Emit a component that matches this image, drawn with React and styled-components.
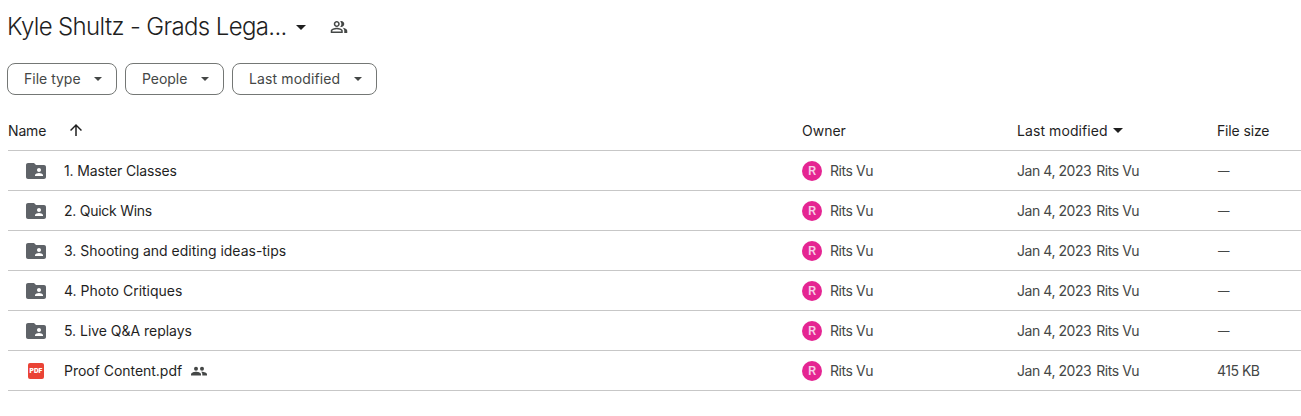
import React from 'react';
import styled, { createGlobalStyle } from 'styled-components';
import { MdArrowUpward, MdFolderShared, MdOutlinePeopleAlt } from 'react-icons/md';

const GlobalStyle = createGlobalStyle`
  * {
    box-sizing: border-box;
  }

  body {
    margin: 0;
    background: #fff;
    color: #1f1f1f;
    font-family: Inter, Roboto, sans-serif;
    font-size: 14px;
  }
`;

const Page = styled.main`
  height: 416px;
  padding-left: 7px;
  overflow: hidden;
`;

const TitleBar = styled.header`
  display: flex;
  align-items: center;
  height: 54px;
`;

const Title = styled.h1`
  width: 289px;
  margin: 0;
  font-size: 24px;
  font-weight: 300;
  line-height: 32px;
  letter-spacing: ${props => props.$spacing}px;
  white-space: nowrap;
`;

const Caret = styled.svg`
  flex: none;
  width: ${props => props.$width}px;
  height: ${props => props.$width / 2}px;
  margin-left: ${props => props.$gap || 0}px;
  fill: ${props => props.$color || '#1f1f1f'};
`;

const SharedIcon = styled(MdOutlinePeopleAlt)`
  margin-left: 24px;
  width: 18px;
  height: 18px;
  color: #444746;
`;

const Filters = styled.div`
  display: flex;
  gap: 8px;
  margin-top: 9px;
`;

const FilterButton = styled.button`
  display: flex;
  align-items: center;
  justify-content: space-between;
  width: ${props => props.$width}px;
  height: 32px;
  padding: 0 14px 0 16px;
  border: 1px solid #747775;
  border-radius: 8px;
  background: #fff;
  color: #444746;
  font-family: inherit;
  font-size: 14px;
  line-height: 20px;
  white-space: nowrap;
`;

const Text = styled.span`
  letter-spacing: ${props => props.$spacing || 0}px;
  white-space: nowrap;
`;

const Table = styled.div`
  margin-top: 16px;
  padding-left: 1px;
`;

const Row = styled.div`
  display: grid;
  grid-template-columns: 794px 215px 200px 1fr;
  align-items: center;
  height: 40px;
  border-bottom: 1px solid #c7c7c7;
`;

const Cell = styled.div`
  display: flex;
  align-items: center;
  color: ${props => (props.$muted ? '#444746' : '#1f1f1f')};
`;

const SortArrow = styled(MdArrowUpward)`
  margin: -2px 0 0 21px;
  width: 18px;
  height: 18px;
`;

const FileIcon = styled.div`
  display: flex;
  justify-content: center;
  width: 24px;
  margin: 0 16px;
  color: #5f6368;
`;

const PdfBadge = styled.div`
  width: 16px;
  height: 16px;
  border-radius: 2px;
  background: #ea4335;
  color: #fff;
  font-size: 6.5px;
  font-weight: 900;
  line-height: 16px;
  text-align: center;
`;

const PeopleIcon = styled.svg`
  width: 16px;
  height: 16px;
  margin-left: 9px;
  fill: #444746;
`;

const Avatar = styled.div`
  width: 20px;
  height: 20px;
  margin-right: 8px;
  border-radius: 50%;
  background: #e52592;
  color: #f8cfe6;
  font-family: Roboto, sans-serif;
  font-size: 13px;
  font-weight: 500;
  line-height: 20px;
  text-align: center;
`;

const ModifiedBy = styled.span`
  margin-left: 5px;
`;

const EmptySize = styled.span`
  margin-left: 1px;
  font-size: 11.5px;
`;

const filters = [
  { label: 'File type', width: 110, spacing: 0 },
  { label: 'People', width: 99, spacing: -0.05 },
  { label: 'Last modified', width: 145, spacing: 0.12 },
];

const files = [
  { name: '1. Master Classes', spacing: -0.14 },
  { name: '2. Quick Wins', spacing: -0.26 },
  { name: '3. Shooting and editing ideas-tips', spacing: -0.01 },
  { name: '4. Photo Critiques', spacing: 0 },
  { name: '5. Live Q&A replays', spacing: -0.03 },
  { name: 'Proof Content.pdf', spacing: -0.03, pdf: true, size: '415 KB' },
];

const DownCaret = ({ width, color, gap }) => (
  <Caret viewBox="0 0 10 5" $width={width} $color={color} $gap={gap}>
    <path d="M0 0h10L5 5z" />
  </Caret>
);

const FileRow = ({ file }) => (
  <Row>
    <Cell>
      <FileIcon>
        {file.pdf ? <PdfBadge>PDF</PdfBadge> : <MdFolderShared size={24} />}
      </FileIcon>
      <Text $spacing={file.spacing}>{file.name}</Text>
      {file.pdf && (
        <PeopleIcon viewBox="0 0 16 16">
          <circle cx="5" cy="5.7" r="2" />
          <circle cx="11" cy="5.7" r="2" />
          <path d="M0 12.5v-1.2C0 9.6 3 8.7 5 8.7s5 .9 5 2.6v1.2z" />
          <path d="M10.5 8.7C13 8.6 16 9.6 16 11.3v1.2h-4.7v-1.2c0-1.1-.4-1.900-1.300-2.500z" />
        </PeopleIcon>
      )}
    </Cell>
    <Cell $muted>
      <Avatar>R</Avatar>
      <Text $spacing={-0.45}>Rits Vu</Text>
    </Cell>
    <Cell $muted>
      <Text $spacing={-0.45}>Jan 4, 2023</Text>
      <ModifiedBy>
        <Text $spacing={-0.45}>Rits Vu</Text>
      </ModifiedBy>
    </Cell>
    <Cell $muted>
      {file.size ? <Text $spacing={-0.5}>{file.size}</Text> : <EmptySize>—</EmptySize>}
    </Cell>
  </Row>
);

const App = () => (
  <>
    <GlobalStyle />
    <Page>
      <TitleBar>
        <Title $spacing={-0.64}>Kyle Shultz - Grads Lega...</Title>
        <DownCaret width={10} />
        <SharedIcon />
      </TitleBar>
      <Filters>
        {filters.map(filter => (
          <FilterButton key={filter.label} $width={filter.width}>
            <Text $spacing={filter.spacing}>{filter.label}</Text>
            <DownCaret width={8} color="#444746" />
          </FilterButton>
        ))}
      </Filters>
      <Table>
        <Row>
          <Cell>
            <Text $spacing={-0.15}>Name</Text>
            <SortArrow />
          </Cell>
          <Cell>
            <Text $spacing={0}>Owner</Text>
          </Cell>
          <Cell>
            <Text $spacing={0.08}>Last modified</Text>
            <DownCaret width={10} gap={5} />
          </Cell>
          <Cell>
            <Text $spacing={-0.15}>File size</Text>
          </Cell>
        </Row>
        {files.map(file => (
          <FileRow key={file.name} file={file} />
        ))}
      </Table>
    </Page>
  </>
);

export default App;
